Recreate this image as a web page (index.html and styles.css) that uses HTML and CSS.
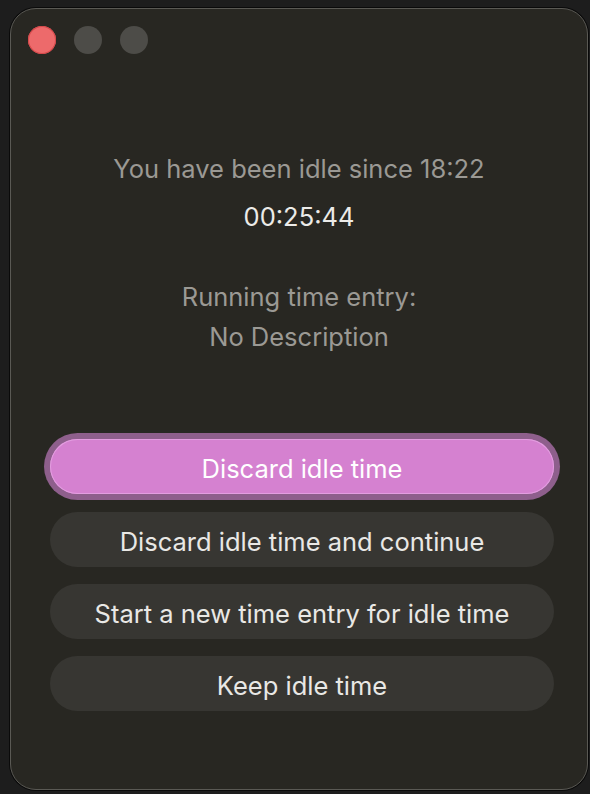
FILE: index.html
```html
<!DOCTYPE html>
<html>
<head>
  <meta charset="UTF-8">
  <title>Idle</title>
  <link rel="stylesheet" href="styles.css">
</head>
<body>
  <div class="window">
    <div class="titlebar">
      <span class="light red"></span>
      <span class="light"></span>
      <span class="light"></span>
    </div>
    <div class="info">
      <p class="since">You have been idle since 18:22</p>
      <p class="duration">00:25:44</p>
      <p class="entry">Running time entry:<br>No Description</p>
    </div>
    <div class="actions">
      <button class="btn primary">Discard idle time</button>
      <button class="btn">Discard idle time and continue</button>
      <button class="btn">Start a new time entry for idle time</button>
      <button class="btn">Keep idle time</button>
    </div>
  </div>
</body>
</html>
```

FILE: styles.css
```css
html, body { margin: 0; height: 100%; }
body { background: #1d1d1d; font-family: Inter, "Noto Sans", sans-serif; padding: 8px 2px 4px 10px; box-sizing: border-box; }
.window { height: 782px; width: 578px; box-sizing: border-box; background: #282722; border: 1px solid #5a5954; border-radius: 26px; box-shadow: 0 0 0 1px #0a0a0a; display: flex; flex-direction: column; }
.titlebar { display: flex; gap: 18px; padding: 17px 0 0 17px; height: 47px; box-sizing: border-box; }
.light { width: 28px; height: 28px; border-radius: 50%; background: #4d4c48; }
.light.red { background: #ed6a6b; box-shadow: inset 0 0 0 1px #d5484a; }
.info { text-align: center; color: #9b9994; font-size: 25.5px; padding-top: 98px; }
.info p { margin: 0; }
.since { line-height: 30px; }
.duration { color: #ecebe8; margin-top: 18px !important; line-height: 30px; }
.entry { margin-top: 45px !important; line-height: 40px; }
.actions { display: flex; flex-direction: column; gap: 17px; padding: 82px 33px 0 39px; }
.btn { height: 55px; border: none; border-radius: 28px; background: #373632; color: #e9e8e5; font-family: inherit; font-size: 25.5px; padding: 3px 0 0; }
.btn.primary { background: #d581d0; color: #fff; box-shadow: inset 0 0 0 1px #e39ee0, 0 0 0 6px #8e5f8c; margin-bottom: 1px; }
```
